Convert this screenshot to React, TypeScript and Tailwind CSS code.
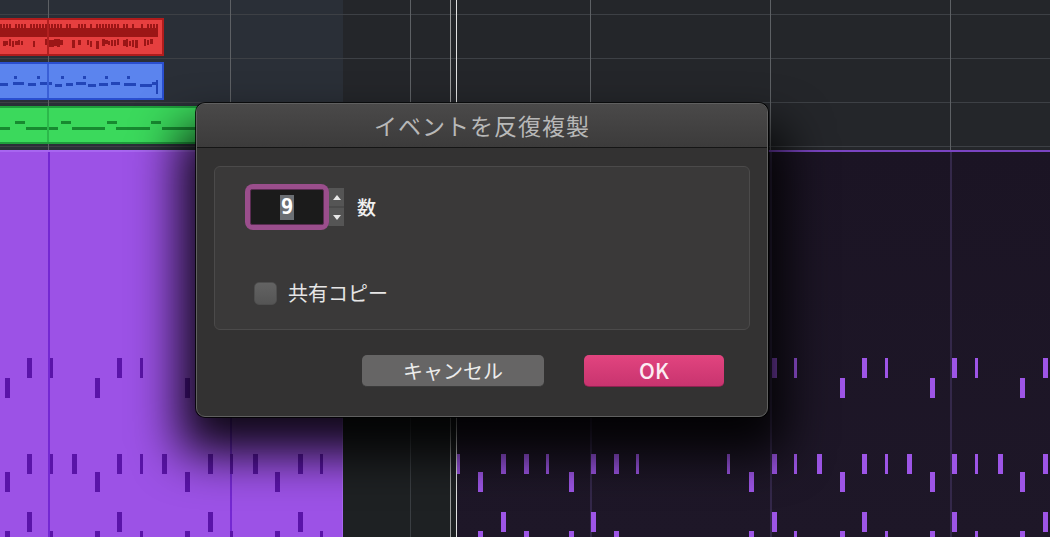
import React from "react";

const JP = { fontFamily: '"Noto Sans CJK JP", "Noto Sans", sans-serif' };

// 16th-note grid of the drum region
const noteX = (i: number) => Math.round(4.5 + i * 22.57);
const THIN = new Set([2, 6, 10, 14, 20, 24, 28, 32, 35, 39, 43]);

// row tops measured from the top of the lower section
const ROWS = [206, 226, 302, 320, 360, 379];

const LEFT_NOTES: number[][] = [
  [1, 2, 5, 6, 9, 10, 13, 14],
  [0, 4, 8, 12],
  [1, 2, 3, 5, 6, 7, 9, 10, 11, 13, 14],
  [0, 4, 8, 12],
  [1, 5, 9, 13],
  [0, 2, 4, 6, 8, 10, 12, 14],
];

const RIGHT_NOTES: number[][] = [
  [34, 35, 38, 39, 42, 43, 46],
  [37, 41, 45],
  [20, 22, 23, 24, 26, 27, 28, 32, 34, 35, 36, 38, 39, 40, 42, 43, 44, 46],
  [21, 25, 33, 37, 41, 45],
  [22, 26, 34, 38, 42, 46],
  [21, 23, 25, 27, 33, 35, 37, 39, 41, 43, 45],
];

const rnd = (n: number) => {
  const v = Math.sin(n * 12.9898) * 43758.5453;
  return v - Math.floor(v);
};

function Notes({ rows, offset, color }: { rows: number[][]; offset: number; color: string }) {
  return (
    <>
      {rows.map((row, r) =>
        row.map((i) => {
          const x = noteX(i) - offset;
          return (
            <div
              key={`${r}-${i}`}
              className={`absolute h-[20px] ${color}`}
              style={{ left: Math.max(0, x), top: ROWS[r], width: THIN.has(i) ? 3 : 5 }}
            />
          );
        })
      )}
    </>
  );
}

function RedPattern() {
  const cols = Array.from({ length: 53 }, (_, k) => k);
  return (
    <svg width="164" height="34" className="absolute left-0 top-0">
      <rect x="0" y="8" width="158" height="9" fill="#9c1616" />
      {cols
        .filter((k) => rnd(k + 3) > 0.3)
        .map((k) => (
          <rect key={`b${k}`} x={k * 3} y={4} width={2} height={4} fill="#9c1616" />
        ))}
      {cols
        .filter((k) => rnd(k + 51) > 0.2)
        .map((k) => (
          <rect
            key={`l${k}`}
            x={k * 3}
            y={19 + Math.round(rnd(k + 9) * 2)}
            width={rnd(k + 21) > 0.45 ? 3 : 2}
            height={4 + Math.round(rnd(k + 77) * 4)}
            fill="#9c1616"
          />
        ))}
      <rect x="47" y="0" width="2" height="34" fill="#b22020" />
    </svg>
  );
}

function BluePattern() {
  const dashes = [
    [0, 8, 19], [13, 24, 18], [28, 36, 19], [40, 52, 18], [55, 62, 20], [66, 73, 19],
    [76, 86, 18], [88, 96, 20], [99, 108, 19], [111, 120, 18], [124, 136, 19], [140, 152, 20], [152, 158, 18],
  ];
  const dots = [14, 37, 61, 83, 105, 127];
  return (
    <svg width="164" height="34" className="absolute left-0 top-0">
      {dashes.map(([a, b, y], k) => (
        <rect key={k} x={a} y={y} width={b - a} height={3} fill="#2245b8" />
      ))}
      {dots.map((x) => (
        <rect key={x} x={x} y={12} width={3} height={3} fill="#2245b8" />
      ))}
      <rect x="156" y="16" width="2" height="14" fill="#2245b8" />
      <rect x="47" y="0" width="2" height="34" fill="#3a5fd6" />
    </svg>
  );
}

function GreenPattern() {
  const long = [[0, 10], [26, 58], [72, 105], [116, 150], [162, 196], [208, 240]];
  const short = [15, 61, 107, 151, 197];
  return (
    <svg width="240" height="34" className="absolute left-0 top-0">
      {long.map(([a, b]) => (
        <rect key={a} x={a} y={19} width={b - a} height={3} fill="#178a30" />
      ))}
      {short.map((x) => (
        <rect key={x} x={x} y={13} width={10} height={3} fill="#178a30" />
      ))}
      <rect x="47" y="0" width="2" height="34" fill="#2cb84b" />
    </svg>
  );
}

function Dialog() {
  return (
    <div className="absolute left-[195px] top-[102px] z-20">
      {/* soft drop shadow */}
      <div className="absolute top-[26px] right-[-16px] bottom-[-36px] left-[-16px] rounded-[16px] bg-black/90 blur-[24px]" />
      <div className="relative rounded-[10px] bg-black/80 p-px">
        <div
          className="flex h-[314px] w-[572px] flex-col overflow-hidden rounded-[9px] border border-[#606060] bg-[#333232]"
          style={JP}
        >
          <div className="flex h-[44px] shrink-0 items-center justify-center border-b border-[#151515] bg-gradient-to-b from-[#4a4949] to-[#3c3b3b] text-[23px] tracking-[1px] text-[#b8b8b8]">
            イベントを反復複製
          </div>
          <div className="px-[17px] pt-[18px]">
            <div className="flex h-[164px] flex-col rounded-[6px] border border-[#4b4a4a] bg-[#3a3939] pl-[30px] pt-[17px]">
              <div className="flex items-center">
                <div className="relative z-10 flex h-[46px] w-[84px] items-center justify-center rounded-[8px] bg-[#9a4e8c] p-[5px]">
                  <div className="flex h-full w-full items-center justify-center rounded-[2px] border border-[#5a2c52] bg-[#1b1b1b]">
                    <span
                      className="inline-block h-[25px] bg-[#6b6f74] px-[1px] text-[21px] font-bold leading-[25px] text-white"
                      style={{ fontFamily: '"DejaVu Sans Mono", monospace' }}
                    >
                      9
                    </span>
                  </div>
                </div>
                <div className="ml-[-7px] flex h-[38px] w-[22px] flex-col gap-[2px] bg-[#4a4a4a] pl-[7px]">
                  <div className="flex flex-1 items-center justify-center bg-[#555555]">
                    <svg width="8" height="5" viewBox="0 0 8 5">
                      <path d="M4 0 L8 5 L0 5 Z" fill="#e8e8e8" />
                    </svg>
                  </div>
                  <div className="flex flex-1 items-center justify-center bg-[#555555]">
                    <svg width="8" height="5" viewBox="0 0 8 5">
                      <path d="M0 0 L8 0 L4 5 Z" fill="#e8e8e8" />
                    </svg>
                  </div>
                </div>
                <span className="ml-[13px] text-[19px] font-medium text-[#f0f0f0]">数</span>
              </div>
              <div className="mt-[48px] ml-[9px] flex items-center gap-[11px]">
                <div className="h-[23px] w-[23px] rounded-[5px] border border-[#4e4e4e] bg-gradient-to-b from-[#636363] to-[#555555]" />
                <span className="text-[20px] text-[#e6e6e6]">共有コピー</span>
              </div>
            </div>
          </div>
          <div className="mt-[25px] flex justify-end gap-[40px] pr-[43px]">
            <button className="flex h-[32px] w-[182px] items-center justify-center rounded-[5px] border-b border-[#3a3a3a] bg-[#666565] text-[20px] text-[#ececec]">
              キャンセル
            </button>
            <button className="flex h-[32px] w-[140px] items-center justify-center rounded-[5px] border-b border-[#8e2250] bg-gradient-to-b from-[#e2447f] to-[#c8346f] text-[21px] font-medium text-[#fcedf4]">
              OK
            </button>
          </div>
        </div>
      </div>
    </div>
  );
}

export default function App() {
  const topLines = [48, 230, 410, 590, 770, 950];

  return (
    <div className="relative flex h-[537px] w-[1050px] flex-col overflow-hidden bg-[#24262a]" style={JP}>
      {/* arrangement lanes */}
      <div className="relative flex h-[150px] shrink-0 flex-col bg-[linear-gradient(to_right,#2a2f37_343px,#24262a_343px)]">
        {topLines.map((x) => (
          <div key={x} className="absolute top-0 h-full w-px bg-[#5d6064]" style={{ left: x }} />
        ))}
        <div className="h-[14px]" />
        <div className="h-[44px] border-t border-[#3d4045]">
          <div className="relative mt-[3px] h-[38px] w-[164px] border-y-2 border-r-2 border-[#b01c1c] bg-[#e63f3f]">
            <RedPattern />
          </div>
        </div>
        <div className="h-[44px] border-t border-[#3d4045]">
          <div className="relative mt-[3px] h-[38px] w-[164px] border-y-2 border-r-2 border-[#2a4fcf] bg-[#5b84ee]">
            <BluePattern />
          </div>
        </div>
        <div className="h-[44px] border-t border-[#3d4045]">
          <div className="relative mt-[3px] h-[38px] w-[240px] border-y-2 border-[#1f9e3c] bg-[#3bd95c]">
            <GreenPattern />
          </div>
        </div>
        <div className="flex-1 border-t border-[#3d4045]" />
      </div>

      {/* drum region */}
      <div className="flex flex-1">
        <div className="relative w-[343px] border-t-2 border-r border-[#a766f0] bg-[#9c52e6]">
          <div className="absolute top-0 left-[48px] h-full w-[2px] bg-[#7428d2]" />
          <div className="absolute top-0 left-[230px] h-full w-[2px] bg-[#7428d2]" />
          <Notes rows={LEFT_NOTES} offset={0} color="bg-[#5a14a8]" />
        </div>
        <div className="relative w-[114px] bg-[#1e2123]">
          <div className="absolute top-0 left-[67px] h-full w-px bg-[#3a3e42]" />
        </div>
        <div className="relative flex-1 border-t-2 border-[#7a44c2] bg-gradient-to-b from-[#1b1424] to-[#1e1728]">
          {[590, 770, 950].map((x) => (
            <div key={x} className="absolute top-0 h-full w-[2px] bg-[#34284a]" style={{ left: x - 457 }} />
          ))}
          <Notes rows={RIGHT_NOTES} offset={457} color="bg-[#9d55e6]" />
        </div>
      </div>

      {/* playhead */}
      <div className="absolute top-0 left-[450px] z-10 h-full w-px bg-[#9a9b9c]" />
      <div className="absolute top-0 left-[456px] z-10 h-full w-px bg-[#e2e2e2]" />

      <Dialog />
    </div>
  );
}
